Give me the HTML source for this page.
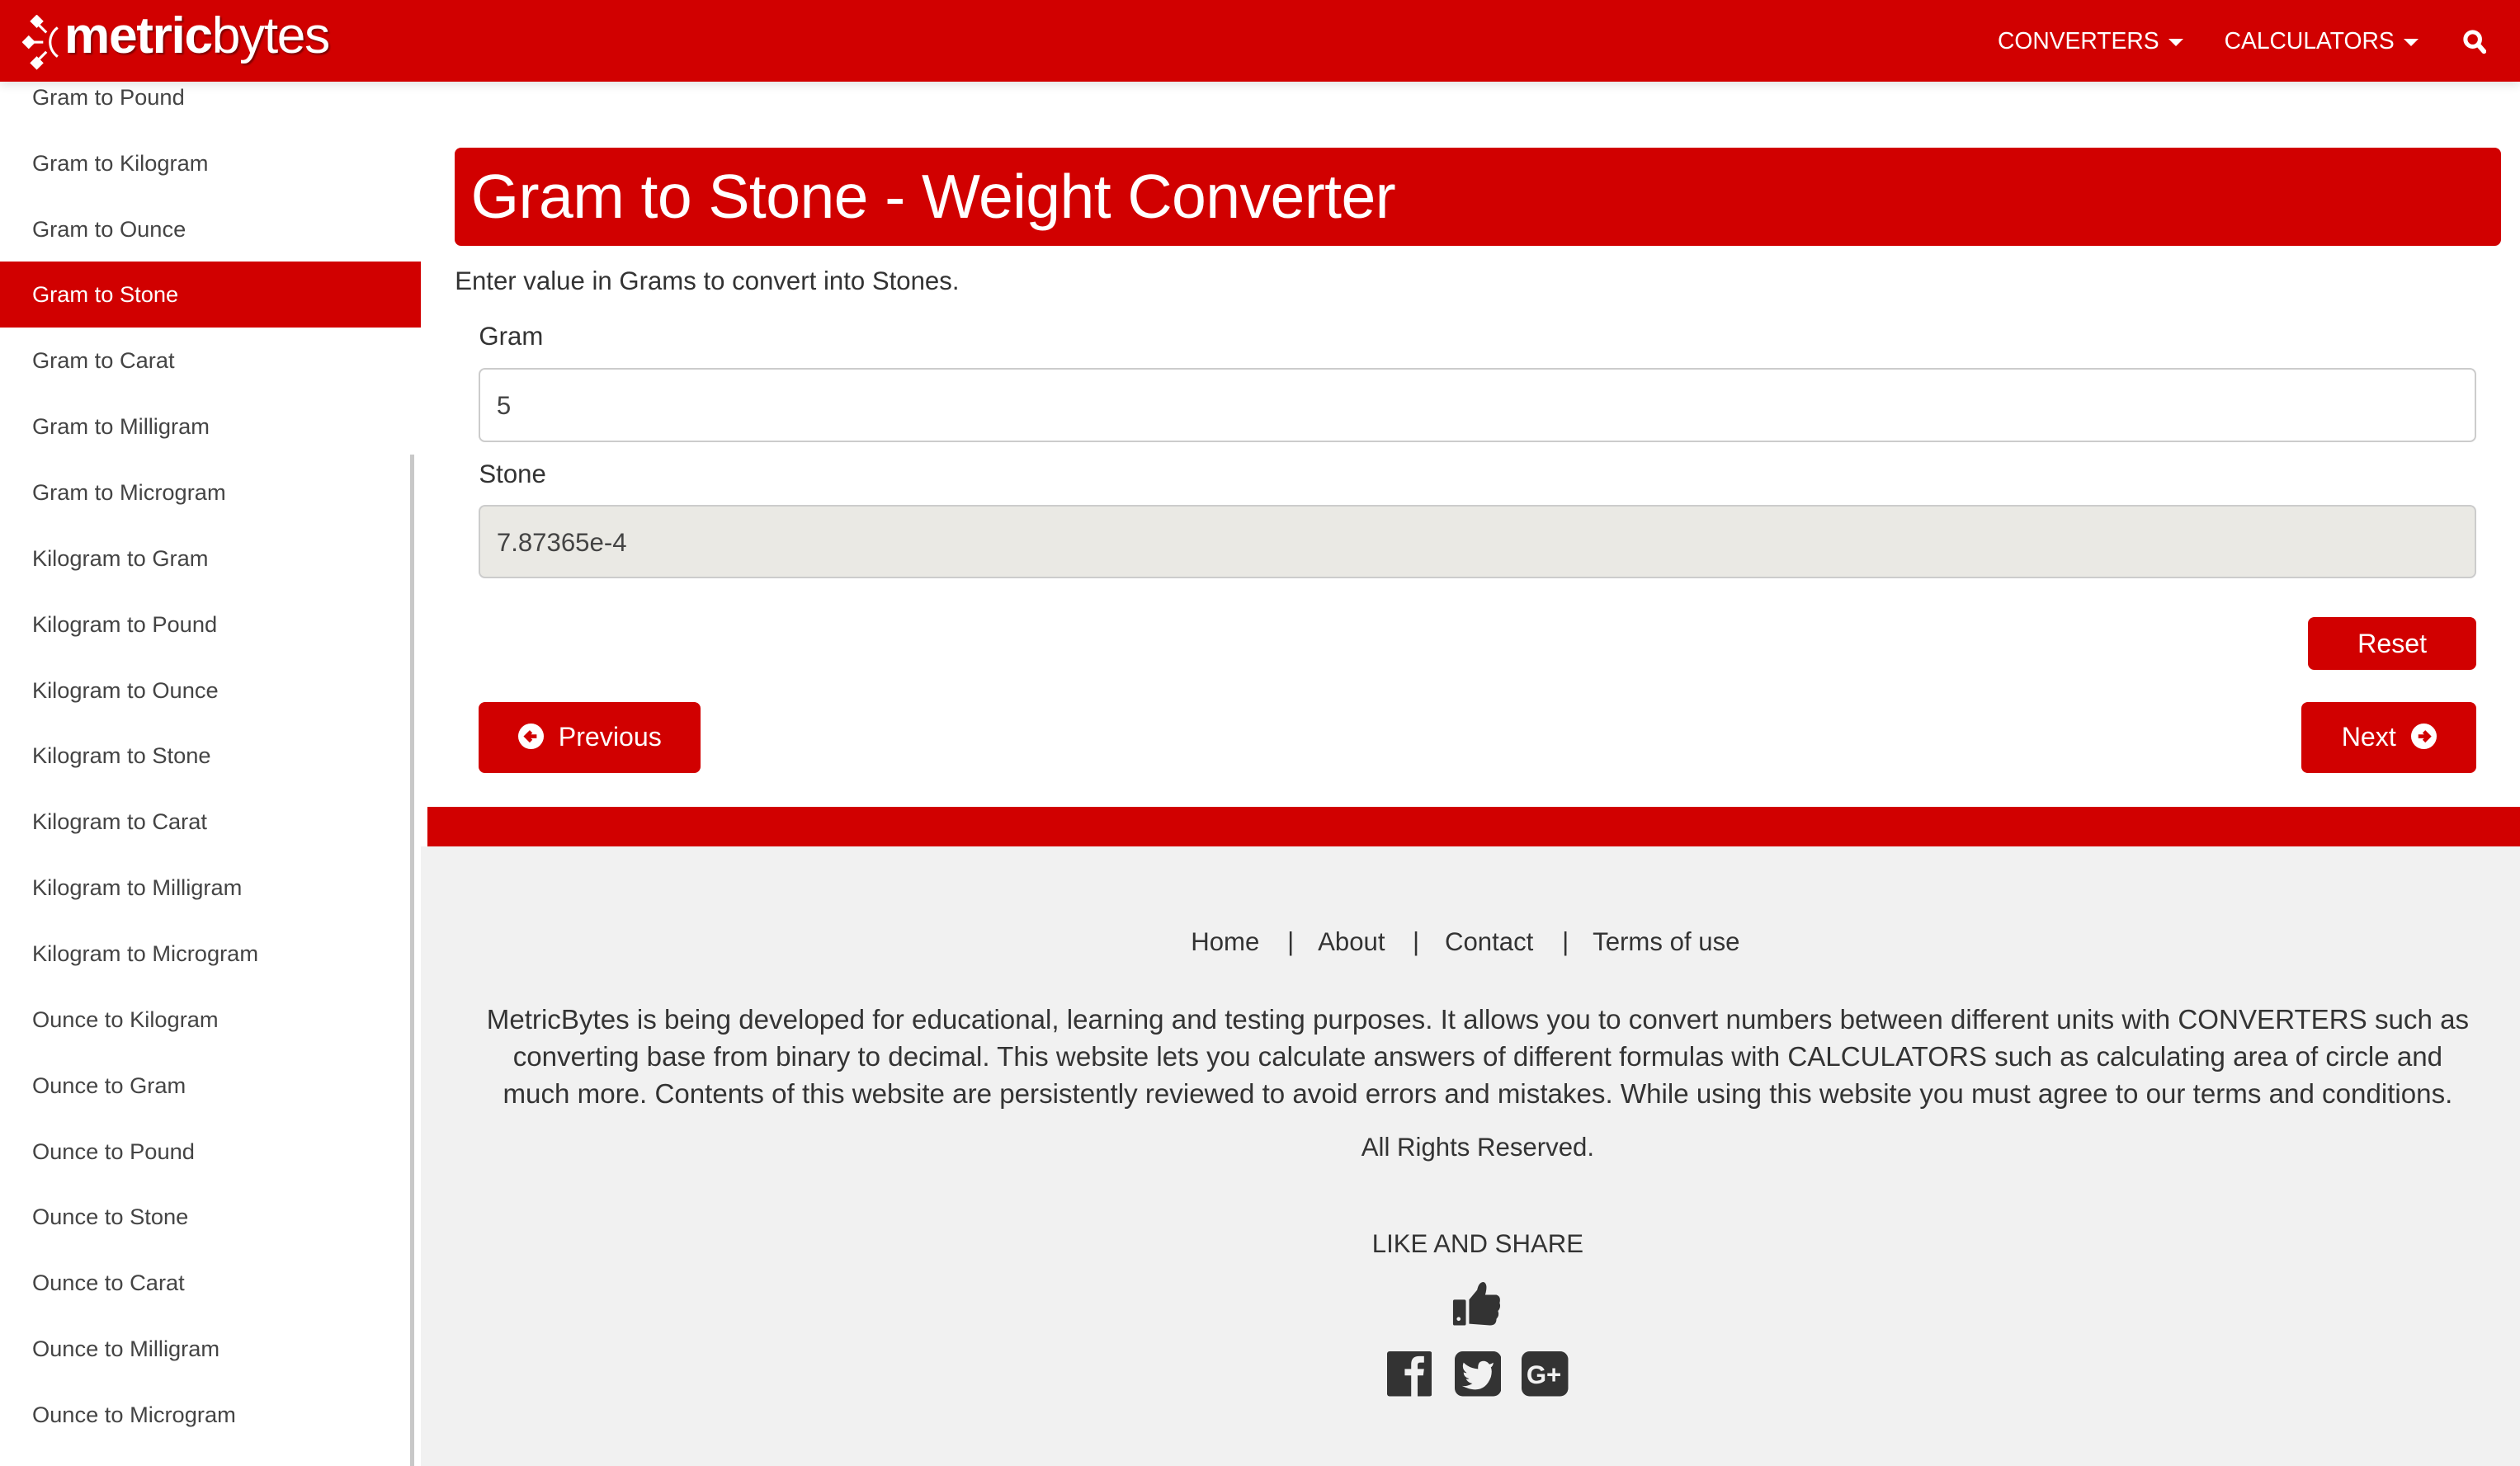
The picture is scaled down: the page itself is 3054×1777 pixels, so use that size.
<!DOCTYPE html>
<html><head><meta charset="utf-8"><style>
html,body{margin:0;padding:0;overflow:hidden}
body{width:1568px;height:912.4px;zoom:1.9477;position:relative;background:#fff;font-family:"Liberation Sans",sans-serif;color:#333}
.hdr{position:absolute;left:0;top:0;width:1568px;height:51px;background:#d10000;box-shadow:0 2px 6px rgba(0,0,0,.12);z-index:3}
.logo{position:absolute;left:40px;top:4px;color:#fff;font-size:32px;letter-spacing:-0.7px;text-shadow:1px 1px 1px rgba(0,0,0,.4)}
.nav{position:absolute;top:17px;color:#fff;font-size:14.5px}
.caret{display:inline-block;width:0;height:0;border-left:5px solid transparent;border-right:5px solid transparent;border-top:5px solid #fff;margin-left:6px;vertical-align:middle}
.side{position:absolute;left:0;top:51px;width:262px;height:862px;background:#fff;overflow:hidden;z-index:1}
.side div{position:absolute;left:0;width:262px;height:41px;line-height:41px;padding-left:20px;box-sizing:border-box;font-size:14px;color:#444}
.side div.act{background:#d10000;color:#fff}
.sb{position:absolute;left:255px;top:283px;width:3px;height:630px;background:#c8c8c8;z-index:2}
.title{position:absolute;left:283px;top:92px;width:1273px;height:61px;background:#d10000;border-radius:4px;color:#fff;font-size:38.6px;letter-spacing:-0.3px;line-height:61px;padding-left:10px;box-sizing:border-box}
.t{position:absolute;font-size:16px;color:#333;white-space:nowrap}
.inp{position:absolute;left:298px;width:1243px;height:46px;border:1.5px solid #ccc;border-radius:4px;box-sizing:border-box;font-size:16px;line-height:45px;padding-left:10px;color:#444}
.btn{position:absolute;background:#d10000;color:#fff;border-radius:4px;font-size:16.5px;text-align:center}
.circ{display:inline-block;width:16px;height:16px;border-radius:50%;background:#fff;vertical-align:-2px;position:relative}
.red{position:absolute;left:266px;top:502px;width:1302px;height:25px;background:#d10000}
.foot{position:absolute;left:262px;top:527px;width:1306px;height:386px;background:#f1f1f1}
.c{position:absolute;left:262px;width:1315px;text-align:center;font-size:16px;color:#333;white-space:nowrap}
</style></head><body>
<div class="hdr">
 <svg style="position:absolute;left:14px;top:9px" width="28" height="36" viewBox="0 0 28 36"><g fill="#fff"><rect x="6" y="1" width="6" height="6" transform="rotate(45 9 4)"/><rect x="1" y="14" width="6" height="6" transform="rotate(45 4 17)"/><rect x="6" y="27" width="6" height="6" transform="rotate(45 9 30)"/></g><g stroke="#fff" stroke-width="1.6" fill="none"><path d="M10 6 L15 11"/><path d="M7 17 L13 17"/><path d="M10 28 L15 23"/><path d="M22 8 A11 11 0 0 0 22 26"/></g></svg>
 <div class="logo"><b>metric</b>bytes</div>
 <div class="nav" style="left:1243px">CONVERTERS<span class="caret"></span></div>
 <div class="nav" style="left:1384px">CALCULATORS<span class="caret"></span></div>
 <svg style="position:absolute;left:1532px;top:18px" width="15" height="16" viewBox="0 0 15 16"><circle cx="6.5" cy="6.5" r="4.5" stroke="#fff" stroke-width="2.6" fill="none"/><path d="M10 10 L13.5 14" stroke="#fff" stroke-width="3" stroke-linecap="round"/></svg>
</div>
<div class="side">
 <div style="top:-11px">Gram to Pound</div>
 <div style="top:30px">Gram to Kilogram</div>
 <div style="top:71px">Gram to Ounce</div>
 <div class="act" style="top:112px">Gram to Stone</div>
 <div style="top:153px">Gram to Carat</div>
 <div style="top:194px">Gram to Milligram</div>
 <div style="top:235px">Gram to Microgram</div>
 <div style="top:276px">Kilogram to Gram</div>
 <div style="top:317px">Kilogram to Pound</div>
 <div style="top:358px">Kilogram to Ounce</div>
 <div style="top:399px">Kilogram to Stone</div>
 <div style="top:440px">Kilogram to Carat</div>
 <div style="top:481px">Kilogram to Milligram</div>
 <div style="top:522px">Kilogram to Microgram</div>
 <div style="top:563px">Ounce to Kilogram</div>
 <div style="top:604px">Ounce to Gram</div>
 <div style="top:645px">Ounce to Pound</div>
 <div style="top:686px">Ounce to Stone</div>
 <div style="top:727px">Ounce to Carat</div>
 <div style="top:768px">Ounce to Milligram</div>
 <div style="top:809px">Ounce to Microgram</div>
</div>
<div class="sb"></div>
<div class="title">Gram to Stone - Weight Converter</div>
<div class="t" style="left:283px;top:166px">Enter value in Grams to convert into Stones.</div>
<div class="t" style="left:298px;top:200px">Gram</div>
<div class="inp" style="top:229px">5</div>
<div class="t" style="left:298px;top:286px">Stone</div>
<div class="inp" style="top:314px;background:#eae9e4">7.87365e-4</div>
<div class="btn" style="left:1436px;top:384px;width:105px;height:33px;line-height:33px">Reset</div>
<div class="btn" style="left:298px;top:437px;width:138px;height:44px;line-height:44px"><span class="circ"><svg width="16" height="16" viewBox="0 0 16 16" style="position:absolute;left:0;top:0"><path d="M11.5 8 H5.5 M8 5 L5 8 L8 11" stroke="#d10000" stroke-width="2.4" fill="none"/></svg></span>&nbsp; Previous</div>
<div class="btn" style="left:1432px;top:437px;width:109px;height:44px;line-height:44px">Next &nbsp;<span class="circ"><svg width="16" height="16" viewBox="0 0 16 16" style="position:absolute;left:0;top:0"><path d="M4.5 8 H10.5 M8 5 L11 8 L8 11" stroke="#d10000" stroke-width="2.4" fill="none"/></svg></span></div>
<div class="red"></div>
<div class="foot"></div>
<div class="t" style="left:741px;top:577px">Home</div>
<div class="t" style="left:801px;top:577px">|</div>
<div class="t" style="left:820px;top:577px">About</div>
<div class="t" style="left:879px;top:577px">|</div>
<div class="t" style="left:899px;top:577px">Contact</div>
<div class="t" style="left:972px;top:577px">|</div>
<div class="t" style="left:991px;top:577px">Terms of use</div>
<div class="c" style="left:262px;width:1315px;top:624px;line-height:23px;font-size:17px">MetricBytes is being developed for educational, learning and testing purposes. It allows you to convert numbers between different units with CONVERTERS such as<br>converting base from binary to decimal. This website lets you calculate answers of different formulas with CALCULATORS such as calculating area of circle and<br>much more. Contents of this website are persistently reviewed to avoid errors and mistakes. While using this website you must agree to our terms and conditions.</div>
<div class="c" style="left:262px;width:1315px;top:705px">All Rights Reserved.</div>
<div class="c" style="left:262px;width:1315px;top:765px">LIKE AND SHARE</div>
<svg style="position:absolute;left:903px;top:797px" width="32" height="30" viewBox="0 0 32 30"><rect x="1" y="12" width="8" height="16" rx="1" fill="#333"/><circle cx="4.5" cy="24" r="1.2" fill="#f1f1f1"/><path d="M11 12 L16 6 Q17 1 20 1 Q23 2 21 9 L28 9 Q31 10 30 14 Q31 17 29 19 Q30 22 28 24 Q28 28 24 28 L11 27 Z" fill="#333"/></svg>
<svg style="position:absolute;left:863px;top:841px" width="28" height="28" viewBox="0 0 28 28"><rect width="28" height="28" rx="1.5" fill="#333"/><path d="M15 28 V15 H11 V11 H15 V8 Q15 3 20 3 H23 V7 H20.5 Q19 7 19 8.5 V11 H23 L22.5 15 H19 V28 Z" fill="#f1f1f1"/></svg>
<svg style="position:absolute;left:905px;top:841px" width="29" height="28" viewBox="0 0 29 28"><rect width="29" height="28" rx="5" fill="#333"/><path d="M24 7 Q22.5 8 21.5 8 Q20 6 18 6 Q14.5 6 14.5 10 V11 Q9 10.5 5.5 7 Q4 11 7.5 13.5 Q6.5 13.5 5.5 13 Q5.5 16 9 17 Q8 17.5 7 17 Q8 19.5 11 20 Q8 22 4.5 21.5 Q18 28 22.5 16 Q23.5 12 22.5 10 Q24 9 24 7 Z" fill="#f1f1f1"/></svg>
<svg style="position:absolute;left:947px;top:841px" width="29" height="28" viewBox="0 0 29 28"><rect width="29" height="28" rx="5" fill="#333"/><text x="3" y="20" font-family="Liberation Sans" font-weight="bold" font-size="16" fill="#f1f1f1">G+</text></svg>
</body></html>
